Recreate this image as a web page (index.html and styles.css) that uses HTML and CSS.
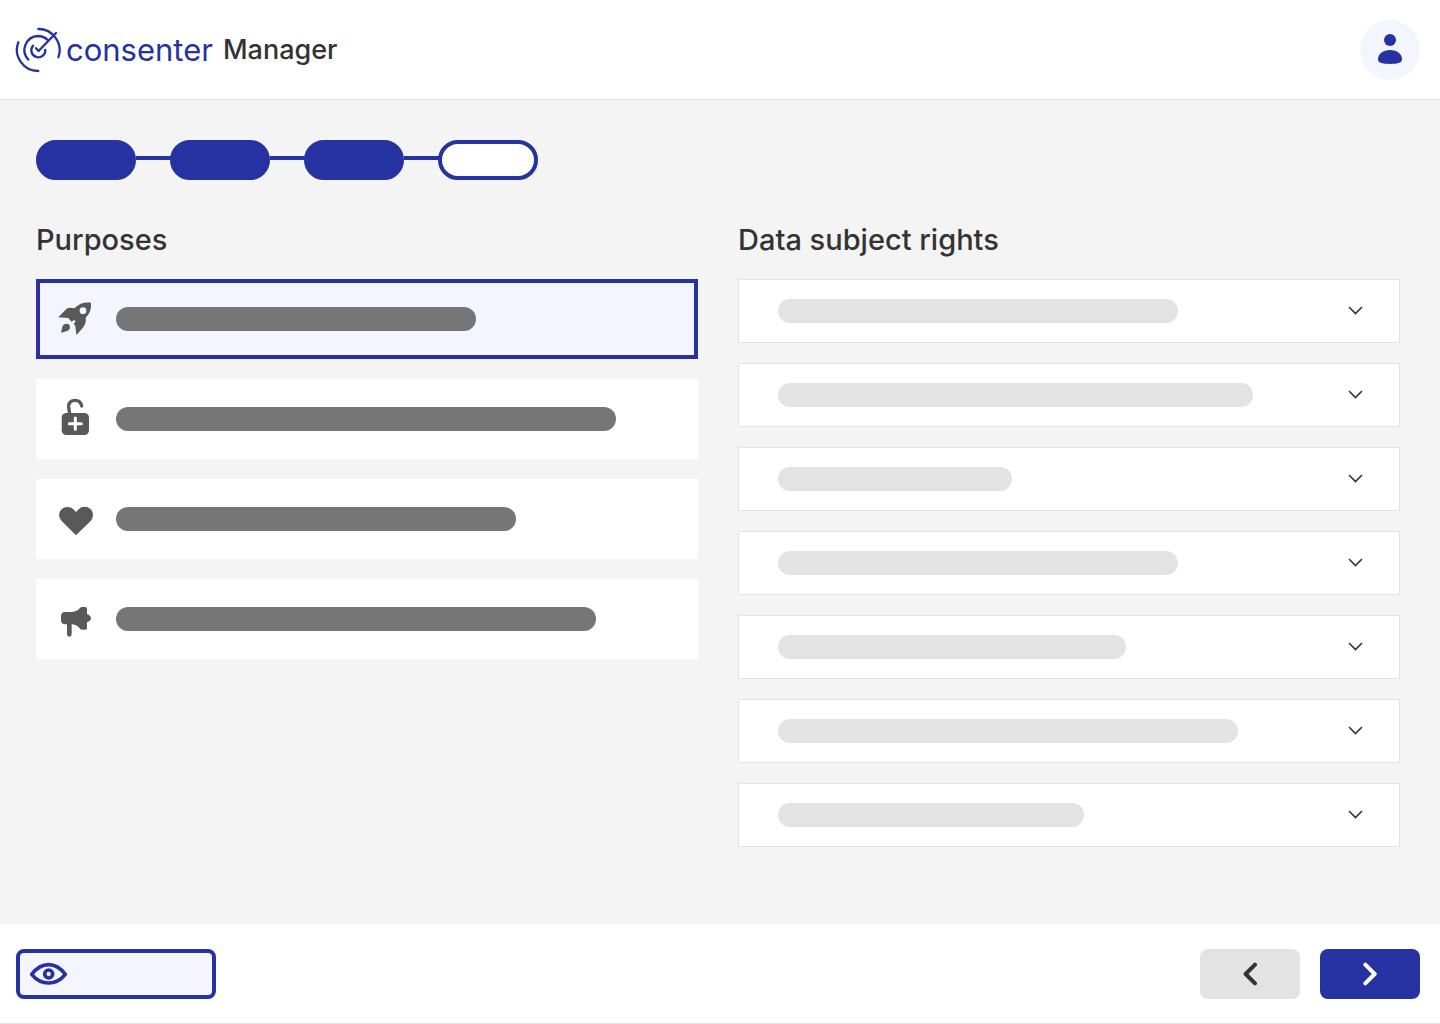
FILE: index.html
```html
<!doctype html>
<html lang="en">
<head>
<meta charset="utf-8">
<meta name="viewport" content="width=device-width, initial-scale=1.0">
<link rel="stylesheet" href="styles.css">
<title>consenter Manager</title>
</head>
<body>
<header class="header">
  <a class="brand" href="#">
    <svg class="brand-mark" viewBox="15 27 46 46" aria-hidden="true">
      <path d="M18.3 42.3A21.2 21.2 0 0 0 38.3 71M38.3 29A21.2 21.2 0 0 1 58.4 57.2"/>
      <path d="M28.3 59.6A14 14 0 0 1 38 36A14 14 0 0 1 48 40.2"/>
      <path d="M33 45.7A7 7 0 1 0 45.3 49.8"/>
      <path d="M36 48.2L38.6 51L56 33"/>
    </svg>
    <span class="brand-name">consenter</span>
    <span class="brand-product">Manager</span>
  </a>
  <button class="avatar" type="button" aria-label="Account">
    <svg viewBox="60 30 180 180" aria-hidden="true">
      <circle cx="150" cy="90" r="18"/>
      <path d="M114 148C114 132 129 120 150 120S186 132 186 148C186 158 176 162 150 162S114 158 114 148Z"/>
    </svg>
  </button>
</header>

<main class="main">
  <ol class="steps" aria-label="Progress">
    <li class="step done"></li>
    <li class="step done"></li>
    <li class="step done"></li>
    <li class="step"></li>
  </ol>

  <div class="columns">
    <section>
      <h2>Purposes</h2>
      <div class="list">
        <button class="purpose selected" type="button" aria-label="Purpose 1">
          <svg class="icon" viewBox="78 87 120 120" aria-hidden="true">
            <path fill-rule="evenodd" d="M183 98C184 116 181 129 167 143C169 158 167 166 139 195L136 168L131 162L137 154L132 150L125 155L119 149L115 144L85 142L110 116C116 112 125 114 134 115C147 100 163 96 183 98ZM159 112A10 10 0 1 0 159 132A10 10 0 1 0 159 112Z"/>
            <path d="M93 188L97 170C100 161 111 159 116 163C122 168 121 179 112 183Z"/>
          </svg>
          <span class="bar" style="width: 360px"></span>
        </button>
        <button class="purpose" type="button" aria-label="Purpose 2">
          <svg class="icon" viewBox="48 42 120 120" aria-hidden="true">
            <path class="shackle" d="M89 88L86 66C85 53 94 46 105 46C116 46 123 53 125 63"/>
            <rect x="65" y="84" width="82" height="66" rx="14"/>
            <path class="plus" d="M106 99V133M88 116H124"/>
          </svg>
          <span class="bar" style="width: 500px"></span>
        </button>
        <button class="purpose" type="button" aria-label="Purpose 3">
          <svg class="icon" viewBox="48 42 120 120" aria-hidden="true">
            <path d="M108 151L65 108C55 98 55 82 65 73C75 63 91 64 100 73L108 81L116 73C126 63 142 63 152 73C161 82 161 98 152 108Z"/>
          </svg>
          <span class="bar" style="width: 400px"></span>
        </button>
        <button class="purpose" type="button" aria-label="Purpose 4">
          <svg class="icon" viewBox="48 342 120 120" aria-hidden="true">
            <path d="M76 381H96C107 380 114 377 119 370C121 367 124 366 128 366H136Q141 366 141 371V387C148 389 153 394 153 400S148 410 141 412V429Q141 434 136 434H127C123 434 121 433 119 430C114 423 107 419 95 417V448Q95 455 88 455T81 448V418H76Q63 418 63 405V394Q63 381 76 381Z"/>
          </svg>
          <span class="bar" style="width: 480px"></span>
        </button>
      </div>
    </section>

    <section>
      <h2>Data subject rights</h2>
      <div class="list">
        <button class="right" type="button" aria-expanded="false" aria-label="Right 1">
          <span class="bar light" style="width: 400px"></span>
          <svg class="chevron" viewBox="0 0 16 16" aria-hidden="true"><path d="M1 4L7.5 10.5L14 4"/></svg>
        </button>
        <button class="right" type="button" aria-expanded="false" aria-label="Right 2">
          <span class="bar light" style="width: 475px"></span>
          <svg class="chevron" viewBox="0 0 16 16" aria-hidden="true"><path d="M1 4L7.5 10.5L14 4"/></svg>
        </button>
        <button class="right" type="button" aria-expanded="false" aria-label="Right 3">
          <span class="bar light" style="width: 234px"></span>
          <svg class="chevron" viewBox="0 0 16 16" aria-hidden="true"><path d="M1 4L7.5 10.5L14 4"/></svg>
        </button>
        <button class="right" type="button" aria-expanded="false" aria-label="Right 4">
          <span class="bar light" style="width: 400px"></span>
          <svg class="chevron" viewBox="0 0 16 16" aria-hidden="true"><path d="M1 4L7.5 10.5L14 4"/></svg>
        </button>
        <button class="right" type="button" aria-expanded="false" aria-label="Right 5">
          <span class="bar light" style="width: 348px"></span>
          <svg class="chevron" viewBox="0 0 16 16" aria-hidden="true"><path d="M1 4L7.5 10.5L14 4"/></svg>
        </button>
        <button class="right" type="button" aria-expanded="false" aria-label="Right 6">
          <span class="bar light" style="width: 460px"></span>
          <svg class="chevron" viewBox="0 0 16 16" aria-hidden="true"><path d="M1 4L7.5 10.5L14 4"/></svg>
        </button>
        <button class="right" type="button" aria-expanded="false" aria-label="Right 7">
          <span class="bar light" style="width: 306px"></span>
          <svg class="chevron" viewBox="0 0 16 16" aria-hidden="true"><path d="M1 4L7.5 10.5L14 4"/></svg>
        </button>
      </div>
    </section>
  </div>
</main>

<footer class="footer">
  <button class="preview" type="button" aria-label="Preview">
    <svg viewBox="84 117 120 120" aria-hidden="true">
      <path d="M95 178C109 160 126 149 146 149S182 160 196 178C182 195 166 204 146 204S109 195 95 178Z"/>
      <circle cx="146" cy="177" r="12"/>
    </svg>
  </button>
  <div class="pager">
    <button class="prev" type="button" aria-label="Back">
      <svg viewBox="174 96 72 72" aria-hidden="true"><path d="M225 104L197 132L225 160"/></svg>
    </button>
    <button class="next" type="button" aria-label="Next">
      <svg viewBox="534 96 72 72" aria-hidden="true"><path d="M556 104L584 132L556 160"/></svg>
    </button>
  </div>
</footer>
</body>
</html>
```
FILE: styles.css
```css
* {
    box-sizing: border-box;
}
body {
    display: flex;
    flex-direction: column;
    min-height: 100vh;
    margin: 0;
    font-family: Inter, "Liberation Sans", sans-serif;
    color: #333;
    background-color: #f4f4f4;
}
button {
    margin: 0;
    padding: 0;
    border: 0;
    font: inherit;
    cursor: pointer;
}
svg {
    display: block;
    flex: none;
}

/* header */
.header {
    display: flex;
    align-items: center;
    justify-content: space-between;
    padding: 20px 20px 19px 15px;
    border-bottom: 1px solid #e3e3e3;
    background-color: #fff;
}
.brand {
    display: flex;
    align-items: center;
    color: #333;
    line-height: 40px;
    text-decoration: none;
}
.brand-mark {
    width: 46px;
    height: 46px;
    margin-right: 5px;
    fill: none;
    stroke: #2632a2;
    stroke-width: 2.3;
    stroke-linecap: round;
    stroke-linejoin: round;
}
.brand-name {
    margin-right: 10px;
    font-size: 31px;
    font-weight: 400;
    color: #2632a2;
}
.brand-product {
    font-size: 27px;
    font-weight: 500;
}
.avatar {
    width: 60px;
    height: 60px;
    border-radius: 50%;
    background-color: #f5f5ff;
}
.avatar svg {
    width: 60px;
    height: 60px;
    fill: #2632a2;
}

/* content */
.main {
    flex: 1;
    padding: 40px 40px 40px 36px;
}
.steps {
    display: flex;
    margin: 0;
    padding: 0;
    list-style: none;
}
.step {
    width: 100px;
    height: 40px;
    border: 4px solid #2632a2;
    border-radius: 20px;
    background-color: #fff;
}
.step.done {
    background-color: #2632a2;
}
.step + .step {
    position: relative;
    margin-left: 34px;
}
.step + .step:before {
    content: "";
    position: absolute;
    top: 12px;
    right: 100%;
    width: 38px;
    height: 4px;
    background-color: #2632a2;
}
.columns {
    display: grid;
    grid-template-columns: 1fr 1fr;
    gap: 40px;
    margin-top: 40px;
}
h2 {
    margin: 0 0 19px;
    font-size: 29px;
    font-weight: 500;
    line-height: 40px;
}
.list {
    display: flex;
    flex-direction: column;
    gap: 20px;
}
.purpose {
    display: flex;
    align-items: center;
    gap: 20px;
    height: 80px;
    padding: 0 16px;
    border: 4px solid #fff;
    background-color: #fff;
}
.purpose.selected {
    border-color: #2632a2;
    background-color: #f5f5ff;
}
.icon {
    width: 40px;
    height: 40px;
    fill: #595959;
    overflow: visible;
}
.shackle {
    fill: none;
    stroke: #595959;
    stroke-width: 10;
    stroke-linecap: round;
}
.plus {
    stroke: #fff;
    stroke-width: 9;
    stroke-linecap: round;
}
.bar {
    height: 24px;
    border-radius: 12px;
    background-color: #767676;
}
.bar.light {
    background-color: #e3e3e3;
}
.right {
    display: flex;
    align-items: center;
    justify-content: space-between;
    height: 64px;
    padding: 0 35px 0 39px;
    border: 1px solid #e3e3e3;
    background-color: #fff;
}
.chevron {
    width: 16px;
    height: 16px;
    fill: none;
    stroke: #333;
    stroke-width: 1.6;
}

/* footer */
.footer {
    display: flex;
    justify-content: space-between;
    padding: 25px 20px 24px 16px;
    border-bottom: 1px solid #e3e3e3;
    background-color: #fff;
}
.preview {
    display: flex;
    align-items: center;
    width: 200px;
    height: 50px;
    padding: 0 8px;
    border: 4px solid #2632a2;
    border-radius: 8px;
    background-color: #f5f5ff;
}
.preview svg {
    width: 40px;
    height: 40px;
    fill: none;
    stroke: #2632a2;
    stroke-width: 11;
    stroke-linejoin: round;
}
.pager {
    display: flex;
    gap: 20px;
}
.prev,
.next {
    display: flex;
    align-items: center;
    justify-content: center;
    width: 100px;
    height: 50px;
    border-radius: 8px;
    color: #333;
    background-color: #e3e3e3;
}
.next {
    color: #fff;
    background-color: #2632a2;
}
.pager svg {
    width: 24px;
    height: 24px;
    fill: none;
    stroke: currentColor;
    stroke-width: 12;
    stroke-linecap: round;
    stroke-linejoin: round;
}
```
